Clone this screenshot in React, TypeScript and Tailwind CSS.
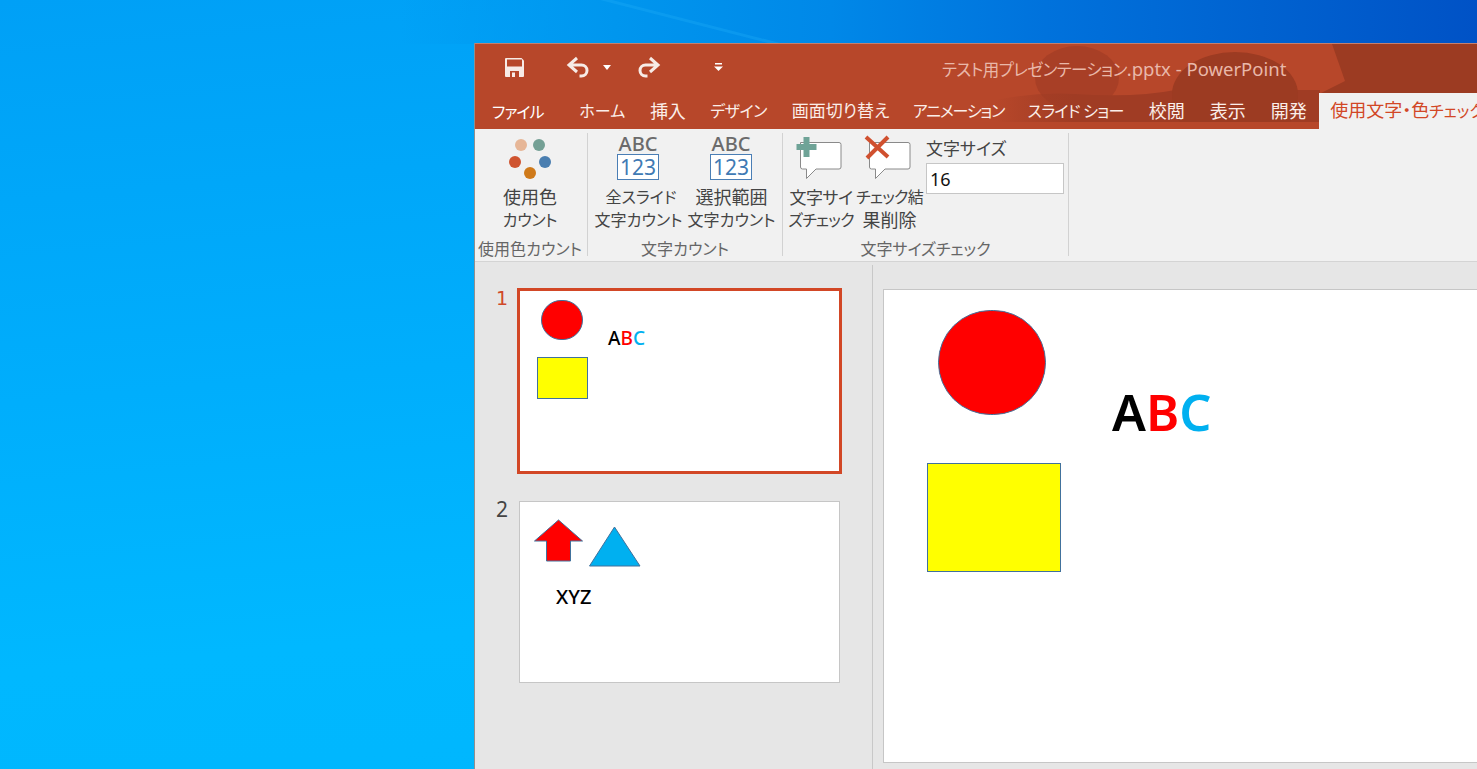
import React from "react";

const JP = "font-['Noto_Sans','Noto_Sans_CJK_JP',sans-serif] [font-feature-settings:'palt']";

function Tab({ label, first, cls }: { label: string; first?: boolean; cls: string }) {
  return (
    <div className={`shrink-0 whitespace-nowrap leading-[36px] ${first ? "pl-[17px] pr-[23.500px] pt-[1px] text-white" : "px-[12.500px] text-[#fbeee9]"} ${cls}`}>
      {label}
    </div>
  );
}

function RibbonButton({ icon, lines, w }: { icon: React.ReactNode; lines: [string, string][]; w: string }) {
  return (
    <div className={`flex flex-col items-center ${w}`}>
      <div className="h-[53px] w-full flex justify-center">{icon}</div>
      <div className="leading-[23px] text-[#444] text-center whitespace-nowrap">
        {lines.map(([l, c]) => (
          <div key={l} className={c}>{l}</div>
        ))}
      </div>
    </div>
  );
}

function AbcIcon() {
  return (
    <div className="flex flex-col items-center -ml-[1px]">
      <div className="text-[20px] leading-[21px] font-medium text-[#6b6b6b] font-['Noto_Sans',sans-serif]">ABC</div>
      <div className="w-[42px] h-[26px] border border-[#4a7eb5] bg-white text-[#3f7ab4] text-[21px] leading-[24px] text-center font-['Noto_Sans',sans-serif]">123</div>
    </div>
  );
}

function Bubble({ kind }: { kind: "plus" | "x" }) {
  return (
    <svg width="50" height="48" viewBox="0 0 50 48" className="mt-[2px] -ml-[2px]">
      <path d="M5.500 7.500H44a2 2 0 0 1 2 2V32a2 2 0 0 1-2 2H21L11.500 43.500V34H7.500a2 2 0 0 1-2-2Z" fill="#fff" stroke="#8a8a8a" strokeWidth="1" />
      {kind === "plus" ? (
        <path d="M8.500 2h6v7h7v6h-7v7h-6v-7H1.500V9h7Z" fill="#6fa397" />
      ) : (
        <path d="M2 2L24 22M24 2L3 23" stroke="#d0502f" strokeWidth="4" fill="none" />
      )}
    </svg>
  );
}

export default function App() {
  return (
    <div className={`w-[1477px] h-[769px] overflow-hidden pl-[474px] pt-[43px] bg-[linear-gradient(175deg,#00a0f6_0%,#00aefc_45%,#00b8ff_75%,#00b6fd_100%)] relative ${JP}`}>
      <div className="absolute right-0 top-0 w-[1077px] h-[44px] bg-[linear-gradient(90deg,#00a2f600_0%,#0096ee_20%,#0088e8_40%,#0072dc_60%,#0062d0_80%,#0052c6_100%)]" />
      <svg width="200" height="44" viewBox="0 0 200 44" className="absolute left-[600px] top-0">
        <path d="M0 0H12L184 44H172Z" fill="#1eabf6" opacity="0.35" />
      </svg>
      <div className="relative w-[1003px] h-[726px] overflow-hidden flex flex-col bg-[#e6e6e6] border-l border-[#8f8f8f]">
        {/* Title + tabs */}
        <div className="relative bg-[#b7472a] border-t border-[#c4806e] h-[86px] shrink-0">
          <svg width="1002" height="85" className="absolute left-0 top-0" viewBox="0 0 1002 85">
            <defs>
              <linearGradient id="band" x1="520" x2="600" y1="0" y2="0" gradientUnits="userSpaceOnUse">
                <stop offset="0" stopColor="#a03c24" stopOpacity="0" />
                <stop offset="1" stopColor="#a03c24" />
              </linearGradient>
            </defs>
            <path d="M857 0H1002V85H844V50L870 37Z" fill="#9c3b22" />
            <ellipse cx="602" cy="34" rx="42" ry="32" fill="#a83f26" />
            <path d="M520 78V56Q560 48 600 50Q660 54 700 46H845V78Z" fill="url(#band)" />
            <path d="M697 50A63 42 0 0 1 823 50Q823 70 815 78H705Q697 70 697 50Z" fill="#9c3b22" />
          </svg>
          <div className="relative flex items-center h-[49px]">
            <svg width="19" height="19" viewBox="0 0 19 19" className="ml-[30px] -mt-[3px]">
              <path d="M0 1A1 1 0 0 1 1 0H16.500L19 2.500V18A1 1 0 0 1 18 19H1A1 1 0 0 1 0 18Z" fill="#f7ebe6" />
              <rect x="2" y="1.500" width="15" height="7" fill="#b7472a" />
              <rect x="5" y="13" width="9" height="6" fill="#b7472a" />
              <rect x="7" y="14.500" width="3" height="4.500" fill="#f7ebe6" />
            </svg>
            <svg width="24" height="22" viewBox="0 0 24 22" className="ml-[42px] -mt-[3px]">
              <path d="M11 2L3 9L11 16M3 9H15.500A5.500 5.500 0 0 1 15.500 20H13.500" fill="none" stroke="#f7ebe6" strokeWidth="3" />
            </svg>
            <svg width="8" height="5" viewBox="0 0 8 5" className="ml-[13px] -mt-[3px]"><path d="M0 0H8L4 5Z" fill="#fff" /></svg>
            <svg width="24" height="22" viewBox="0 0 24 22" className="ml-[26px] -mt-[3px]">
              <path d="M13 2L21 9L13 16M21 9H8.500A5.500 5.500 0 0 0 8.500 20H10.500" fill="none" stroke="#f7ebe6" strokeWidth="3" />
            </svg>
            <svg width="9" height="8" viewBox="0 0 9 8" className="ml-[53px] -mt-[4px]">
              <rect x="1" y="0" width="7" height="1.500" fill="#fff" />
              <path d="M0 3.500H9L4.500 8Z" fill="#fff" />
            </svg>
            <div className="ml-[219px] mt-[1px] text-[#e9b8a9] whitespace-nowrap">
              <span className="text-[16.500px] tracking-[-0.6px]">テスト用プレゼンテーション</span>
              <span className="text-[18.500px]">.pptx - PowerPoint</span>
            </div>
          </div>
          <div className="relative flex h-[36px] items-stretch">
            <Tab label="ファイル" first cls="text-[16px] tracking-[-1px]" />
            <Tab label="ホーム" cls="text-[16px]" />
            <Tab label="挿入" cls="text-[18px] tracking-[-0.5px]" />
            <Tab label="デザイン" cls="text-[16px] tracking-[-0.5px]" />
            <Tab label="画面切り替え" cls="text-[17px] -mr-[1.500px]" />
            <Tab label="アニメーション" cls="text-[16px] tracking-[-1.200px] -mr-[1.500px]" />
            <Tab label="スライド ショー" cls="text-[16px] tracking-[-0.7px]" />
            <Tab label="校閲" cls="text-[18px]" />
            <Tab label="表示" cls="text-[18px]" />
            <Tab label="開発" cls="text-[18px]" />
            <div className="bg-[#f1f1f1] grow pl-[11px] leading-[35px] text-[#d24726] whitespace-nowrap overflow-hidden text-[18px]">
              使用文字・色<span className="text-[16px]">チェック</span>
            </div>
          </div>
        </div>

        {/* Ribbon */}
        <div className="h-[133px] shrink-0 bg-[#f1f1f1] border-b border-[#d4d4d4] flex pt-[4px] pb-[5px]">
          <div className="w-[113px] pr-[2px] border-r border-[#d2d2d2] flex flex-col items-center">
            <div className="flex-1">
              <RibbonButton
                w="w-[100px]"
                lines={[["使用色", "text-[18px]"], ["カウント", "text-[16px] tracking-[-0.3px]"]]}
                icon={
                  <svg width="46" height="44" viewBox="0 0 46 44" className="mt-[4px]">
                    <circle cx="14" cy="8" r="6" fill="#e6b697" />
                    <circle cx="32" cy="8" r="6" fill="#74a095" />
                    <circle cx="8" cy="25" r="6" fill="#cf5430" />
                    <circle cx="38" cy="25" r="6" fill="#4a7eb0" />
                    <circle cx="23" cy="36" r="6" fill="#cf7a1a" />
                  </svg>
                }
              />
            </div>
            <div className="text-[16px] leading-[14px] text-[#666] whitespace-nowrap">使用色カウント</div>
          </div>
          <div className="w-[195px] border-r border-[#d2d2d2] flex flex-col">
            <div className="flex-1 flex pl-[4px]">
              <RibbonButton w="w-[93px]" lines={[["全スライド", "text-[16px] pl-[5px]"], ["文字カウント", "text-[16px]"]]} icon={<AbcIcon />} />
              <RibbonButton w="w-[93px]" lines={[["選択範囲", "text-[18px]"], ["文字カウント", "text-[16px]"]]} icon={<AbcIcon />} />
            </div>
            <div className="text-[16px] leading-[14px] text-[#666] text-center">文字カウント</div>
          </div>
          <div className="w-[286px] border-r border-[#d2d2d2] flex flex-col">
            <div className="flex-1 flex pl-[4px]">
              <RibbonButton w="w-[68px]" lines={[["文字サイ", "text-[17px] tracking-[-0.5px]"], ["ズチェック", "text-[16px] tracking-[-0.8px]"]]} icon={<Bubble kind="plus" />} />
              <RibbonButton w="w-[69px]" lines={[["チェック結", "text-[16px] tracking-[-0.8px]"], ["果削除", "text-[18px]"]]} icon={<Bubble kind="x" />} />
              <div className="flex flex-col pl-[2px]">
                <div className="text-[17px] leading-[23px] text-[#444] pt-[4px] whitespace-nowrap">文字サイズ</div>
                <div className="w-[138px] h-[31px] mt-[3px] bg-white border border-[#c6c6c6] pl-[3px] text-[18px] leading-[31px] text-[#111]">16</div>
              </div>
            </div>
            <div className="text-[16px] leading-[14px] text-[#666] text-center">文字サイズチェック</div>
          </div>
        </div>

        {/* Body */}
        <div className="flex flex-1 min-h-0">
          <div className="w-[398px] shrink-0 mt-[3px] border-r border-[#c8c8c8] pt-[23px] flex flex-col gap-[27px]">
            <div className="flex">
              <div className="w-[42px] pl-[21px] text-[19px] leading-[20px] text-[#d0492a] font-['DejaVu_Sans',sans-serif]">1</div>
              <div className="relative w-[325px] h-[186px] bg-white border-[3px] border-[#d24726]">
                <div className="absolute left-[21px] top-[9px] w-[42px] h-[40px] rounded-full bg-[#ff0000] border border-[#41719c]" />
                <div className="absolute left-[17px] top-[66px] w-[51px] h-[42px] bg-[#ffff00] border border-[#41719c]" />
                <div className="absolute left-[88px] top-[35px] text-[19px] leading-[24px] font-medium text-black whitespace-nowrap">A<span className="text-[#ff0000]">B</span><span className="text-[#00b0f0]">C</span></div>
              </div>
            </div>
            <div className="flex">
              <div className="w-[44px] pl-[21px] text-[21px] leading-[16px] text-[#444]">2</div>
              <div className="relative w-[321px] h-[182px] bg-white border border-[#c6c6c6]">
                <svg width="130" height="70" viewBox="0 0 130 70" className="absolute left-0 top-0">
                  <path d="M14.500 39L38.500 18L62.500 39H50.500V59H26.500V39Z" fill="#ff0000" stroke="#41719c" />
                  <path d="M69.500 64L94.500 25L120 64Z" fill="#00b0f0" stroke="#41719c" />
                </svg>
                <div className="absolute left-[36px] top-[83px] text-[20px] leading-[24px] font-medium text-black whitespace-nowrap">XYZ</div>
              </div>
            </div>
          </div>
          <div className="flex-1 pl-[10px] pt-[27px]">
            <div className="relative w-[700px] h-[474px] bg-white border border-[#c6c6c6]">
              <div className="absolute left-[54px] top-[20px] w-[108px] h-[105px] rounded-full bg-[#ff0000] border border-[#41719c]" />
              <div className="absolute left-[43px] top-[173px] w-[134px] h-[109px] bg-[#ffff00] border border-[#41719c]" />
              <div className="absolute left-[228px] top-[88px] text-[50.500px] leading-[68px] font-semibold text-black whitespace-nowrap">A<span className="text-[#ff0000]">B</span><span className="text-[#00b0f0]">C</span></div>
            </div>
          </div>
        </div>
      </div>
    </div>
  );
}
